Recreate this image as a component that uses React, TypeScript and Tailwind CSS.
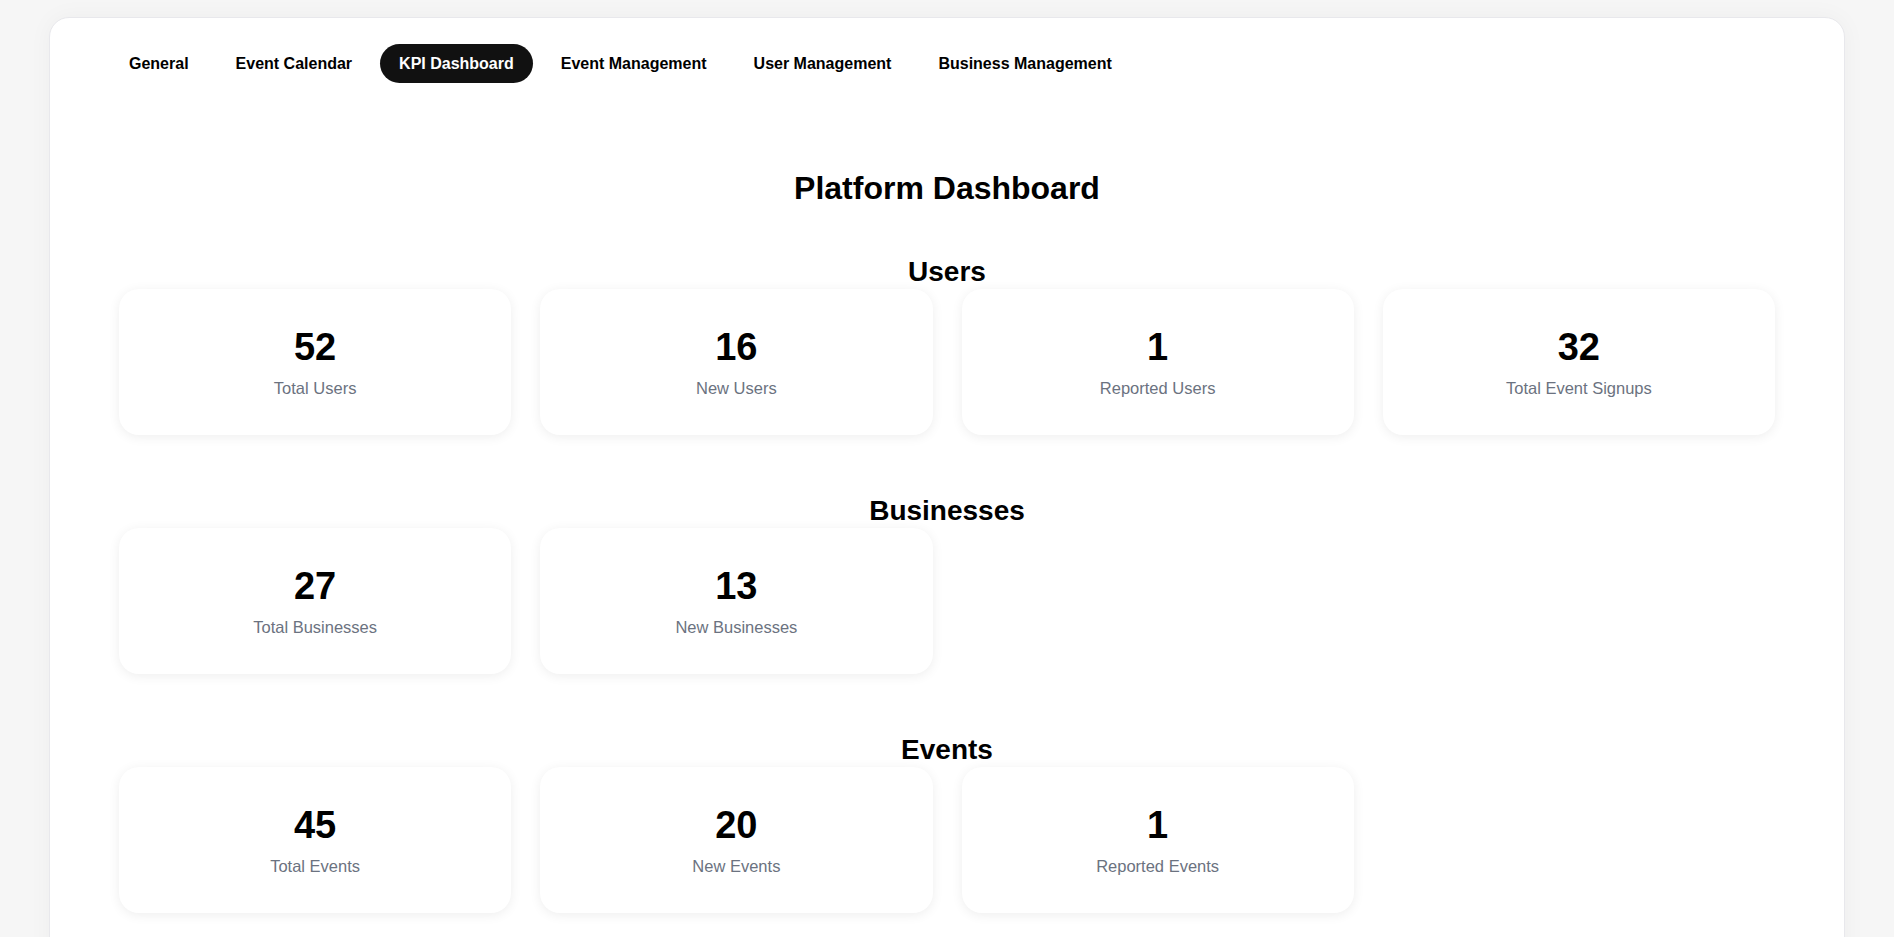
import React from "react";

const tabs = ["General", "Event Calendar", "KPI Dashboard", "Event Management", "User Management", "Business Management"];

const sections: { title: string; items: [string, string][] }[] = [
  { title: "Users", items: [["52", "Total Users"], ["16", "New Users"], ["1", "Reported Users"], ["32", "Total Event Signups"]] },
  { title: "Businesses", items: [["27", "Total Businesses"], ["13", "New Businesses"]] },
  { title: "Events", items: [["45", "Total Events"], ["20", "New Events"], ["1", "Reported Events"]] },
];

export default function App() {
  return (
    <div className="min-h-[937px] h-[937px] overflow-hidden bg-[#f6f6f6] px-[49px] pt-[17px] text-black" style={{ fontFamily: '"Liberation Sans", Arial, sans-serif' }}>
      <div className="min-h-[1000px] rounded-[20px] border border-[#e8e8ec] bg-white px-[69px] pt-[26px] shadow-[0_0_24px_rgba(0,0,0,0.04)]">
        <nav className="-ml-[9px] flex gap-[9px]">
          {tabs.map((t) => (
            <div
              key={t}
              className={`rounded-full px-[19px] py-[9.5px] text-[16px] font-bold leading-[20px] ${t === "KPI Dashboard" ? "bg-[#111111] text-white" : "text-black"}`}
            >
              {t}
            </div>
          ))}
        </nav>
        <h1 className="mt-[85px] text-center text-[32px] font-bold leading-[40px]">Platform Dashboard</h1>
        <div className="mt-[47px] flex flex-col gap-[59px]">
          {sections.map((s) => (
            <section key={s.title}>
              <h2 className="text-center text-[28px] font-bold leading-[34px]">{s.title}</h2>
              <div className="grid grid-cols-4 gap-[29px]">
                {s.items.map(([n, l]) => (
                  <div key={l} className="flex h-[146px] flex-col items-center justify-center rounded-[20px] bg-white shadow-[0_2px_12px_rgba(0,0,0,0.07)]">
                    <div className="text-[38px] font-bold leading-[44px]">{n}</div>
                    <div className="mt-[7px] text-[16.5px] leading-[24px] text-[#6b7280]">{l}</div>
                  </div>
                ))}
              </div>
            </section>
          ))}
        </div>
      </div>
    </div>
  );
}
